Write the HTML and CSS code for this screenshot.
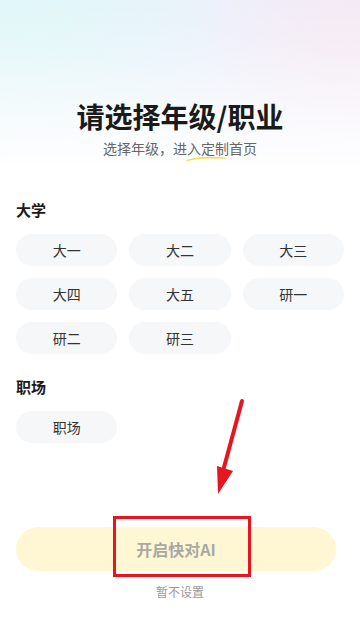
FILE: index.html
```html
<!DOCTYPE html>
<html lang="zh-CN">
<head>
<meta charset="utf-8">
<meta name="viewport" content="width=device-width, initial-scale=1">
<title>请选择年级/职业</title>
<link rel="stylesheet" href="styles.css">
</head>
<body>
<div class="page">
  <div class="hero">
    <h1 class="title">请选择年级/职业</h1>
    <p class="subtitle">选择年级，进<span class="mark">入定<svg class="squiggle" viewBox="0 0 40 6" width="40" height="6"><path d="M1 4.5 C 10 1.5, 22 1, 39 2" fill="none" stroke="#f6dd5c" stroke-width="1.6" stroke-linecap="round"/></svg></span>制首页</p>
  </div>

  <section class="group">
    <h2 class="group-title">大学</h2>
    <div class="chips">
      <div class="chip">大一</div>
      <div class="chip">大二</div>
      <div class="chip">大三</div>
      <div class="chip">大四</div>
      <div class="chip">大五</div>
      <div class="chip">研一</div>
      <div class="chip">研二</div>
      <div class="chip">研三</div>
    </div>
  </section>

  <section class="group group-work">
    <h2 class="group-title">职场</h2>
    <div class="chips">
      <div class="chip">职场</div>
    </div>
  </section>

  <div class="actions">
    <button class="start-btn">开启快对AI</button>
    <div class="skip">暂不设置</div>
  </div>

  <div class="annot-box"></div>
  <svg class="annot-arrow" viewBox="0 0 40 100" width="40" height="100">
    <line x1="32" y1="6" x2="13" y2="76" stroke="#e8141e" stroke-width="4" stroke-linecap="round"/>
    <polygon points="7,71 23,76 8,99" fill="#e8141e"/>
  </svg>
</div>
</body>
</html>
```
FILE: styles.css
```css
* { box-sizing: border-box; }
html, body { margin: 0; padding: 0; }
body {
  font-family: "Noto Sans CJK SC", "Noto Sans", "Liberation Sans", sans-serif;
  background: #fff;
  color: #222;
}
.page {
  position: relative;
  width: 360px;
  min-height: 639px;
  padding: 0 16px;
  background:
    linear-gradient(to bottom, rgba(255,255,255,0) 0px, rgba(255,255,255,0.2) 50px, #ffffff 170px),
    radial-gradient(ellipse 150px 110px at 345px 40px, #f5e9f4 0%, rgba(245,233,244,0) 100%),
    radial-gradient(ellipse 200px 130px at 20px 20px, #e0f7f8 0%, rgba(224,247,248,0) 100%),
    linear-gradient(to right, #e6f4f9, #ebf1fb 60%, #f1edf8);
  overflow: hidden;
}
.hero {
  padding-top: 98px;
  text-align: center;
}
.title {
  margin: 0;
  font-size: 28px;
  line-height: 37px;
  font-weight: 700;
  color: #1a1a1a;
}
.subtitle {
  margin: 3px 0 0;
  font-size: 14px;
  line-height: 20px;
  color: #666;
}
.mark {
  position: relative;
}
.squiggle {
  position: absolute;
  left: -1px;
  bottom: -4px;
}
.group {
  margin-top: 42px;
}
.group-work {
  margin-top: 23px;
}
.group-title {
  margin: 0;
  font-size: 15px;
  line-height: 20px;
  font-weight: 700;
  color: #1a1a1a;
}
.chips {
  margin-top: 14px;
  display: grid;
  grid-template-columns: repeat(3, 1fr);
  gap: 12px;
}
.chip {
  height: 32px;
  border-radius: 16px;
  background: #f6f7f9;
  display: flex;
  align-items: center;
  justify-content: center;
  font-size: 14px;
  color: #333;
}
.actions {
  margin-top: 84px;
  display: flex;
  flex-direction: column;
  align-items: center;
}
.start-btn {
  align-self: flex-start;
  width: 320px;
  height: 44px;
  border: 0;
  border-radius: 22px;
  background: #fff7d4;
  font-family: inherit;
  font-size: 16px;
  font-weight: 700;
  color: #a9a9a4;
  padding: 0;
}
.skip {
  margin-top: 12px;
  font-size: 12px;
  line-height: 18px;
  color: #999;
}
.annot-box {
  position: absolute;
  left: 113px;
  top: 516px;
  width: 138px;
  height: 61px;
  border: 3px solid #e8141e;
}
.annot-arrow {
  position: absolute;
  left: 210px;
  top: 395px;
}
```
